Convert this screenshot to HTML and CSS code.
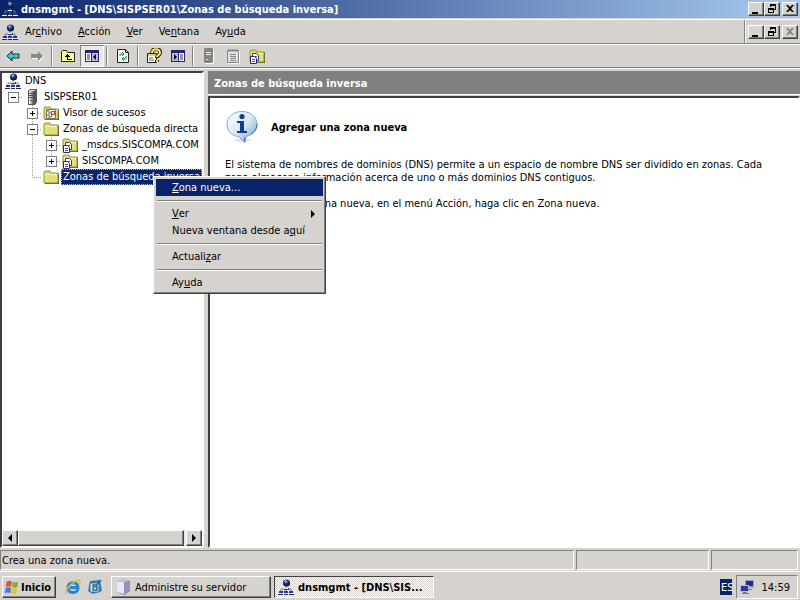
FILE: index.html
```html
<!DOCTYPE html>
<html lang="es">
<head>
<meta charset="utf-8">
<title>dnsmgmt</title>
<link rel="stylesheet" href="styles.css">
</head>
<body>
<svg class="defs" aria-hidden="true">
  <defs>
    <radialGradient id="ball" cx=".4" cy=".3" r=".7"><stop offset="0" stop-color="#b9cce8"/><stop offset=".45" stop-color="#1c2f78"/><stop offset="1" stop-color="#0a0f40"/></radialGradient>
    <linearGradient id="bubble" x1="0" y1="0" x2="1" y2="1"><stop offset="0" stop-color="#fff"/><stop offset=".5" stop-color="#d8e8f6"/><stop offset="1" stop-color="#6ba0d2"/></linearGradient>
    <linearGradient id="metal"><stop offset="0" stop-color="#fff"/><stop offset=".5" stop-color="#a8a8a8"/><stop offset="1" stop-color="#444"/></linearGradient>
  </defs>
  <symbol id="dns" viewBox="0 0 16 16">
    <path d="M8 7v3M3 13v-3h10v3M8 10v3" fill="none" stroke="#777b88"/>
    <circle cx="8.500" cy="4" r="3.600" fill="url(#ball)"/>
    <path d="M6 9h5v2H6zM1 12h4v2H1zM6 12h4v2H6zM11 12h4v2h-4z" fill="#25358c"/>
    <path d="M0 14h5v1H0zM6 14h4v1H6zM11 14h5v1h-5zM6 9h4v1H6z" fill="#e8ecf8"/>
    <path d="M0 15h5v1H0zM6 15h4v1H6zM11 15h5v1h-5z" fill="#20284f"/>
  </symbol>
  <symbol id="server" viewBox="0 0 16 16">
    <path d="M4 2l2-2h7v13l-2 3H4z" fill="#555"/>
    <path d="M5 2h5v13H5z" fill="url(#metal)"/>
    <path d="M5 2l2-1h5l-2 1z" fill="#eee"/>
    <path d="M5 4.500h5M5 6.500h5M5 8.500h5" stroke="#555"/>
    <path d="M6 11h2v1H6z" fill="#2d7a32"/>
  </symbol>
  <symbol id="folder" viewBox="0 0 16 16">
    <path d="M2 14h13V4l1 1v10H2z" fill="#4b4b22"/>
    <path d="M1 3l1-1h5l1 2h7v10H1z" fill="#d9d568" stroke="#98953c"/>
    <path d="M2 5h12v1H2z" fill="#ffffb8"/>
    <path d="M2 6h12v7H2z" fill="#e2df7c"/>
  </symbol>
  <symbol id="zone" viewBox="0 0 16 16">
    <use href="#folder"/>
    <path d="M3.500 5.500h4l2 2v5h-6z" fill="#fff" stroke="#37376b"/>
    <path d="M1.500 8.500h4l2 2v5h-6z" fill="#fff" stroke="#292968"/>
    <path d="M3 11.500h3M3 13.500h3M6 8.500h2" stroke="#3b49b0"/>
  </symbol>
  <symbol id="events" viewBox="0 0 16 16">
    <use href="#folder"/>
    <path d="M3.500 4.500h9v9h-9z" fill="#fff" stroke="#777755"/>
    <path d="M4 6h3M5 8h3M4 10h3M5 12h3" stroke="#555"/>
    <path d="M8 6h4v1H8zM8 7h1v5H8z" fill="#36c"/><path d="M9 9h3v1H9zM11 6h1v4h-1z" fill="#c33"/>
  </symbol>
  <symbol id="min" viewBox="0 0 10 10"><path d="M1 8h6v2H1z"/></symbol>
  <symbol id="restore" viewBox="0 0 10 10"><path d="M3 0h6v6H7V5h1V2H4v1H3zM1 4h6v5H1zM2 6v2h4V6z" fill-rule="evenodd"/></symbol>
  <symbol id="close" viewBox="0 0 10 10"><path d="M1 1h2l2 2 2-2h2L6 4.500 9 8H7L5 6 3 8H1l3-3.500z"/></symbol>
  <symbol id="left" viewBox="0 0 8 8"><path d="M6 0v8L2 4z"/></symbol>
  <symbol id="right" viewBox="0 0 8 8"><path d="M2 0v8l4-4z"/></symbol>
</svg>

<div class="window">
  <header class="titlebar">
    <svg class="ico"><use href="#dns"/></svg>
    <h1>dnsmgmt - [DNS\SISPSER01\Zonas de búsqueda inversa]</h1>
    <div class="controls">
      <button class="raised" aria-label="Minimizar"><svg><use href="#min"/></svg></button>
      <button class="raised" aria-label="Restaurar"><svg><use href="#restore"/></svg></button>
      <button class="raised apart" aria-label="Cerrar"><svg><use href="#close"/></svg></button>
    </div>
  </header>

  <div class="menubar">
    <svg class="ico"><use href="#dns"/></svg>
    <nav>
      <button>Ar<u>c</u>hivo</button>
      <button><u>A</u>cción</button>
      <button><u>V</u>er</button>
      <button>Ve<u>n</u>tana</button>
      <button>Ay<u>u</u>da</button>
    </nav>
    <div class="controls child">
      <button class="raised" aria-label="Minimizar ventana"><svg><use href="#min"/></svg></button>
      <button class="raised" aria-label="Restaurar ventana"><svg><use href="#restore"/></svg></button>
      <button class="raised apart" aria-label="Cerrar ventana" disabled><svg><use href="#close"/></svg></button>
    </div>
  </div>

  <div class="toolbar">
    <button aria-label="Atrás"><svg viewBox="0 0 16 16"><path d="M2 8l5-5v3h7v4H7v3z" fill="#3fc4c8" stroke="#0b3436"/></svg></button>
    <button aria-label="Adelante"><svg viewBox="0 0 16 16"><path d="M15 9l-5-5v3H3v4h7v3z" fill="#fff"/><path d="M14 8L9 3v3H2v4h7v3z" fill="#888"/></svg></button>
    <span class="rule"></span>
    <button class="gap" aria-label="Subir un nivel"><svg viewBox="0 0 16 16"><path d="M1.500 13.500v-10l1-1h4l1 2h7v9z" fill="#ffff9c" stroke="#222"/><path d="M5 8h1V7h1V6h1v1h1v1h1v1H8v2h4v1H7V9H5z" fill="#000"/></svg></button>
    <button class="pressed" aria-label="Mostrar u ocultar árbol"><svg viewBox="0 0 16 16"><path d="M1 2h14v12H1z" fill="#25256e"/><path d="M2 5h5v8H2zM8 5h6v8H8z" fill="#fff"/><path d="M8 5h6v8H8z" fill="#b8b8e0"/><path d="M3 7h3M3 9h3M3 11h3" stroke="#25256e"/><path d="M12 6v6L9 9z"/></svg></button>
    <span class="rule"></span>
    <button class="gap" aria-label="Actualizar"><svg viewBox="0 0 16 16"><path d="M2.500 1.500h8l3 3v10h-11z" fill="#fff" stroke="#222"/><path d="M10.500 1.500v3h3" fill="none" stroke="#222"/><path d="M5 8V6h4M7 4l2 2-2 2M11 8v3H7M9 9l-2 2 2 2" fill="none" stroke="#13803d"/></svg></button>
    <span class="rule"></span>
    <button class="gap" aria-label="Ayuda"><svg viewBox="0 0 16 16"><path d="M1.500 5.500h9v9h-9z" fill="#fff" stroke="#222"/><path d="M2 6h8v2H2z" fill="#ddd66a"/><path d="M3 10h4M3 12h5" stroke="#666"/><path d="M6 5c0-6 9-5 8 0 0 2-3 2-3 5M11 12v2" fill="none" stroke="#222" stroke-width="4"/><path d="M6 5c0-5 8-5 8 0 0 2-3 2-3 4M11 12v2" fill="none" stroke="#ffed55" stroke-width="2"/></svg></button>
    <button aria-label="Mostrar u ocultar panel"><svg viewBox="0 0 16 16"><path d="M1 2h14v12H1z" fill="#25256e"/><path d="M2 5h6v8H2z" fill="#b8b8e0"/><path d="M9 5h5v8H9z" fill="#fff"/><path d="M10 7h3M10 9h3M10 11h3" stroke="#25256e"/><path d="M4 6v6l3-3z"/></svg></button>
    <span class="rule"></span>
    <button class="gap" aria-label="Servidor"><svg viewBox="0 0 16 16"><path d="M4 2h9v14H4z" fill="#fff"/><path d="M3 1l1-1h7l1 1v13l-1 1H4l-1-1z" fill="#848484"/><path d="M5 4.500h5M5 6.500h5M5 11.500h2" stroke="#eee"/></svg></button>
    <button aria-label="Propiedades"><svg viewBox="0 0 16 16"><path d="M3.500 3.500h11v12h-11z" fill="none" stroke="#fff"/><path d="M2.500 2.500h11v12h-11z" fill="#e4e2dc" stroke="#848484"/><path d="M4 1v3M6 1v3M8 1v3M10 1v3M12 1v3M5 6.500h6M5 8.500h6M5 10.500h6M5 12.500h6" stroke="#848484"/></svg></button>
    <button aria-label="Zona nueva"><svg viewBox="0 0 16 16"><use href="#zone"/></svg></button>
  </div>

  <main class="panes">
    <section class="left sunken">
      <ul class="tree">
        <li><svg class="ico"><use href="#dns"/></svg><span class="label">DNS</span></li>
        <li><i class="cell box minus stub"></i><svg class="ico"><use href="#server"/></svg><span class="label">SISPSER01</span></li>
        <li><i class="cell"></i><i class="cell box plus line stub"></i><svg class="ico"><use href="#events"/></svg><span class="label">Visor de sucesos</span></li>
        <li><i class="cell"></i><i class="cell box minus line stub"></i><svg class="ico"><use href="#folder"/></svg><span class="label">Zonas de búsqueda directa</span></li>
        <li><i class="cell"></i><i class="cell line"></i><i class="cell box plus line stub"></i><svg class="ico"><use href="#zone"/></svg><span class="label">_msdcs.SISCOMPA.COM</span></li>
        <li><i class="cell"></i><i class="cell line"></i><i class="cell box plus half stub"></i><svg class="ico"><use href="#zone"/></svg><span class="label">SISCOMPA.COM</span></li>
        <li><i class="cell"></i><i class="cell half stub"></i><svg class="ico"><use href="#folder"/></svg><span class="label selected">Zonas de búsqueda inversa</span></li>
      </ul>
      <div class="scrollbar">
        <button class="raised" aria-label="Desplazar a la izquierda"><svg><use href="#left"/></svg></button>
        <div class="track"><div class="thumb raised"></div></div>
        <button class="raised" aria-label="Desplazar a la derecha"><svg><use href="#right"/></svg></button>
      </div>
    </section>
    <section class="right">
      <h2>Zonas de búsqueda inversa</h2>
      <article class="sunken">
        <div class="heading">
          <svg viewBox="0 0 34 34"><ellipse cx="17" cy="30" rx="9" ry="2" fill="#e4e8ec"/><path d="M17 1.500c8.500 0 15 5.500 15 13 0 6-4.500 10.500-11 12l-1 6-6-5.700C7 26 2 21 2 14.500c0-7.500 6.500-13 15-13z" fill="url(#bubble)" stroke="#8aa6c4"/><path d="M26 24c4-2 6-6 6-10M20 27l-1 5" stroke="#376fae" fill="none"/><circle cx="17" cy="6.500" r="2.600" fill="#143a8c"/><path d="M12 11h7v10h3v2H12v-2h3v-8h-3z" fill="#143a8c"/></svg>
          <h3>Agregar una zona nueva</h3>
        </div>
        <p>El sistema de nombres de dominios (DNS) permite a un espacio de nombre DNS ser dividido en zonas. Cada zona almacena información acerca de uno o más dominios DNS contiguos.</p>
        <p>Para agregar una zona nueva, en el menú Acción, haga clic en Zona nueva.</p>
      </article>
    </section>
  </main>

  <footer class="status">
    <span>Crea una zona nueva.</span><span></span><span></span>
  </footer>
</div>

<div class="taskbar">
  <button class="raised start"><svg viewBox="0 0 18 16"><path d="M3 2c2-1.500 4-1 6 0L8 8C6 7 4 7 2 8z" fill="#e2562b"/><path d="M10 2c2 1 4 1 6 0l-1 6c-2 1-4 1-6 0z" fill="#74b338"/><path d="M2 9c2-1 4-1 6 0l-1 6c-2-1-4-1-6 0z" fill="#3e78d2"/><path d="M9 9c2 1 4 1 6 0l-1 6c-2 1-4 1-6 0z" fill="#f3bd2f"/></svg>Inicio</button>
  <div class="quick">
    <button aria-label="Internet Explorer"><svg viewBox="0 0 16 16"><path d="M13 10c-1 5-10 5-10-1.500S13 2 13 8.500H5" fill="none" stroke="#2786d2" stroke-width="3"/><path d="M1 15C-1 11 8 2 14 1c2 0 1 3 0 4" fill="none" stroke="#e0b544" stroke-width="1.500"/></svg></button>
    <button aria-label="Mostrar escritorio"><svg viewBox="0 0 16 16"><path d="M3 2l10-1 2 11-9 3-5-3z" fill="#3481b8"/><path d="M3 4h9v9H3z" fill="#e9f5ff" stroke="#2b6c9f"/><path d="M10 6H6v5h4V8H7M9 7l5-6" fill="none" stroke="#28648f" stroke-width="1.500"/></svg></button>
  </div>
  <button class="raised task"><svg viewBox="0 0 16 16"><path d="M2 2l6-2 7 2v10l-6 4-7-3z" fill="#747495"/><path d="M2 2l7 1v12l-7-2z" fill="#e8e8f4"/><path d="M2 2l6-2 7 2-6 1z" fill="#c9c9de"/><path d="M9 3l6-1v10l-6 4z" fill="#9292b8"/></svg>Administre su servidor</button>
  <button class="task active"><svg class="ico"><use href="#dns"/></svg>dnsmgmt - [DNS\SIS...</button>
  <span class="lang">ES</span>
  <div class="tray">
    <svg viewBox="0 0 16 16"><path d="M6 1h9v8H6z" fill="#9ca3ce"/><path d="M7 2h7v5H7z" fill="#252c80"/><path d="M1 6h9v7H1z" fill="#b3b8dc"/><path d="M2 7h7v5H2z" fill="#303890"/><path d="M9 10h4v1H9zM4 13h4v1h2v1H3v-1h1z" fill="#77778c"/></svg>
    <time>14:59</time>
  </div>
</div>

<div class="context" role="menu">
  <button role="menuitem" class="hot"><u>Z</u>ona nueva...</button>
  <hr>
  <button role="menuitem"><u>V</u>er<svg><use href="#right"/></svg></button>
  <button role="menuitem">Nueva ventana desde a<u>q</u>uí</button>
  <hr>
  <button role="menuitem">Actuali<u>z</u>ar</button>
  <hr>
  <button role="menuitem">Ay<u>u</u>da</button>
</div>
</body>
</html>
```
FILE: styles.css
```css
* { box-sizing: border-box; }

:root {
  --face: #d6d3ce;
  --shade: #808080;
  --dark: #404040;
  --navy: #0a246a;
}

body {
  margin: 0;
  height: 100vh;
  display: flex;
  flex-direction: column;
  overflow: hidden;
  background: var(--face);
  color: #000;
  font: 11px/13px "DejaVu Sans Condensed", "DejaVu Sans", sans-serif;
}

h1, h2, h3, p, ul { margin: 0; padding: 0; font-size: 11px; }
button { margin: 0; padding: 0; border: 0; background: none; color: inherit; font: inherit; }
svg { display: block; flex: none; }
.defs { position: absolute; width: 0; height: 0; }
.ico { width: 16px; height: 16px; }

.raised {
  background: var(--face);
  border: 1px solid;
  border-color: #fff var(--dark) var(--dark) #fff;
  box-shadow: inset -1px -1px var(--shade);
}
.sunken {
  border: 2px solid;
  border-color: var(--dark) #fff #fff var(--dark);
  background: #fff;
}

.window { flex: 1; min-height: 0; display: flex; flex-direction: column; }

.titlebar {
  flex: none;
  height: 18px;
  display: flex;
  align-items: center;
  gap: 3px;
  padding: 0 2px;
  background: linear-gradient(90deg, #0a246a, #a6caf0);
  color: #fff;
}
.titlebar h1 { flex: 1; white-space: nowrap; }
.titlebar .ico { background: none; }

.controls { display: flex; }
.controls button { width: 16px; height: 14px; display: grid; place-items: center; }
.controls .apart { margin-left: 2px; }
.controls svg { width: 10px; height: 10px; }
.controls button:disabled { fill: var(--shade); }

.menubar {
  flex: none;
  height: 25px;
  margin-top: 1px;
  display: flex;
  align-items: center;
  padding: 0 2px;
  border-top: 1px solid #fff;
  border-bottom: 1px solid var(--shade);
}
.menubar nav { flex: 1; display: flex; gap: 16px; padding-left: 7px; }
.child { height: 23px; align-items: center; padding-left: 3px; border-left: 1px solid var(--shade); box-shadow: inset 1px 0 #fff; }

.toolbar {
  flex: none;
  height: 24px;
  display: flex;
  align-items: center;
  padding-left: 1px;
  border-top: 1px solid #fff;
  border-bottom: 1px solid var(--shade);
}
.toolbar button { width: 24px; height: 22px; display: grid; place-items: center; }
.toolbar svg { width: 16px; height: 16px; }
.toolbar .gap { margin-left: 3px; }
.toolbar .pressed { background: #ebe9e6; border: 1px solid; border-color: var(--shade) #fff #fff var(--shade); }
.rule { width: 2px; height: 20px; margin-left: 2px; border-left: 1px solid var(--shade); border-right: 1px solid #fff; }

.panes { flex: 1; min-height: 0; display: flex; gap: 4px; padding-top: 2px; border-top: 1px solid #fff; }
.left { width: 204px; flex: none; display: flex; flex-direction: column; }
.tree { flex: 1; list-style: none; overflow: hidden; padding-left: 2px; white-space: nowrap; }
.tree li { height: 16px; display: flex; }
.tree .ico { margin: 0 2px 0 1px; }
.label { padding: 1px 2px 0; height: 16px; }
.selected { background: var(--navy); color: #fff; outline: 1px dotted #e0c070; outline-offset: -1px; flex: 1; overflow: hidden; }

.cell {
  width: 19px;
  height: 16px;
  flex: none;
  display: grid;
  place-items: center;
  background-repeat: no-repeat;
  --v: repeating-linear-gradient(180deg, #999 0 1px, #fff 1px 2px);
  --h: repeating-linear-gradient(90deg, #999 0 1px, #fff 1px 2px);
}
.cell.stub { background-image: var(--h); background-position: 9px 8px; background-size: 10px 1px; }
.cell.line { background-image: var(--v); background-position: 9px 0; background-size: 1px 16px; }
.cell.line.stub { background-image: var(--v), var(--h); background-position: 9px 0, 9px 8px; background-size: 1px 16px, 10px 1px; }
.cell.half.stub { background-image: var(--v), var(--h); background-position: 9px 0, 9px 8px; background-size: 1px 8px, 10px 1px; }
.box::before {
  content: "";
  width: 9px;
  height: 9px;
  border: 1px solid var(--shade);
  background: linear-gradient(#000, #000) center / 5px 1px no-repeat, #fff;
}
.plus::before {
  background: linear-gradient(#000, #000) center / 5px 1px no-repeat, linear-gradient(#000, #000) center / 1px 5px no-repeat, #fff;
}

.scrollbar { flex: none; height: 16px; display: flex; background: #ebe9e6; }
.scrollbar button { width: 16px; display: grid; place-items: center; }
.scrollbar svg { width: 8px; height: 8px; }
.track { flex: 1; display: flex; }
.thumb { width: 99%; }

.right { flex: 1; min-width: 0; display: flex; flex-direction: column; }
.right h2 { height: 24px; padding: 6px 6px 0; background: var(--shade); color: #fff; border-bottom: 1px solid #fff; }
article { flex: 1; margin-top: 1px; padding: 12px 24px 0 15px; }
.heading { display: flex; align-items: center; gap: 12px; margin-bottom: 14px; }
.heading svg { width: 34px; height: 34px; }
article p { margin-bottom: 13px; }

.status { flex: none; height: 20px; display: flex; gap: 2px; margin-top: 2px; padding-right: 2px; }
.status span { flex: 132 1 0; padding: 3px 1px 0; border: 1px solid; border-color: var(--shade) #fff #fff var(--shade); }
.status span:first-child { flex-grow: 580; }
.status span:last-child { flex-grow: 84; }

.taskbar {
  flex: none;
  height: 29px;
  display: flex;
  align-items: center;
  padding: 2px 2px 0;
  margin-top: 1px;
  border-top: 1px solid #fff;
}
.taskbar button { display: flex; align-items: center; }
.taskbar svg { width: 16px; height: 16px; }
.start { width: 54px; height: 22px; font-weight: bold; gap: 1px; padding-left: 1px; }
.quick { display: flex; gap: 6px; margin: 0 8px 0 9px; }
.task { width: 160px; height: 22px; gap: 4px; padding-left: 3px; margin-right: 3px; white-space: nowrap; }
.task.active {
  font-weight: bold;
  border: 1px solid;
  border-color: var(--dark) #fff #fff var(--dark);
  background: repeating-conic-gradient(#fff 0 25%, var(--face) 0 50%) 0 0 / 2px 2px;
}
.lang { width: 12px; height: 16px; margin: 0 4px 0 auto; padding: 2px 1px 0; overflow: hidden; background: var(--navy); color: #fff; }
.tray { height: 24px; width: 62px; display: flex; align-items: center; justify-content: space-between; padding: 0 7px 0 2px; border: 1px solid; border-color: var(--shade) #fff #fff var(--shade); }

.context {
  position: absolute;
  left: 153px;
  top: 176px;
  width: 173px;
  padding: 2px;
  background: var(--face);
  border: 1px solid;
  border-color: #fff var(--dark) var(--dark) #fff;
  box-shadow: inset -1px -1px var(--shade);
}
.context button { width: 100%; height: 17px; display: flex; align-items: center; padding: 0 6px 0 16px; text-align: left; white-space: pre; }
.context svg { width: 8px; height: 8px; margin-left: auto; }
.context .hot { background: var(--navy); color: #fff; }
.context hr { height: 2px; margin: 4px 1px 3px; border: 0; border-top: 1px solid var(--shade); border-bottom: 1px solid #fff; }
```
